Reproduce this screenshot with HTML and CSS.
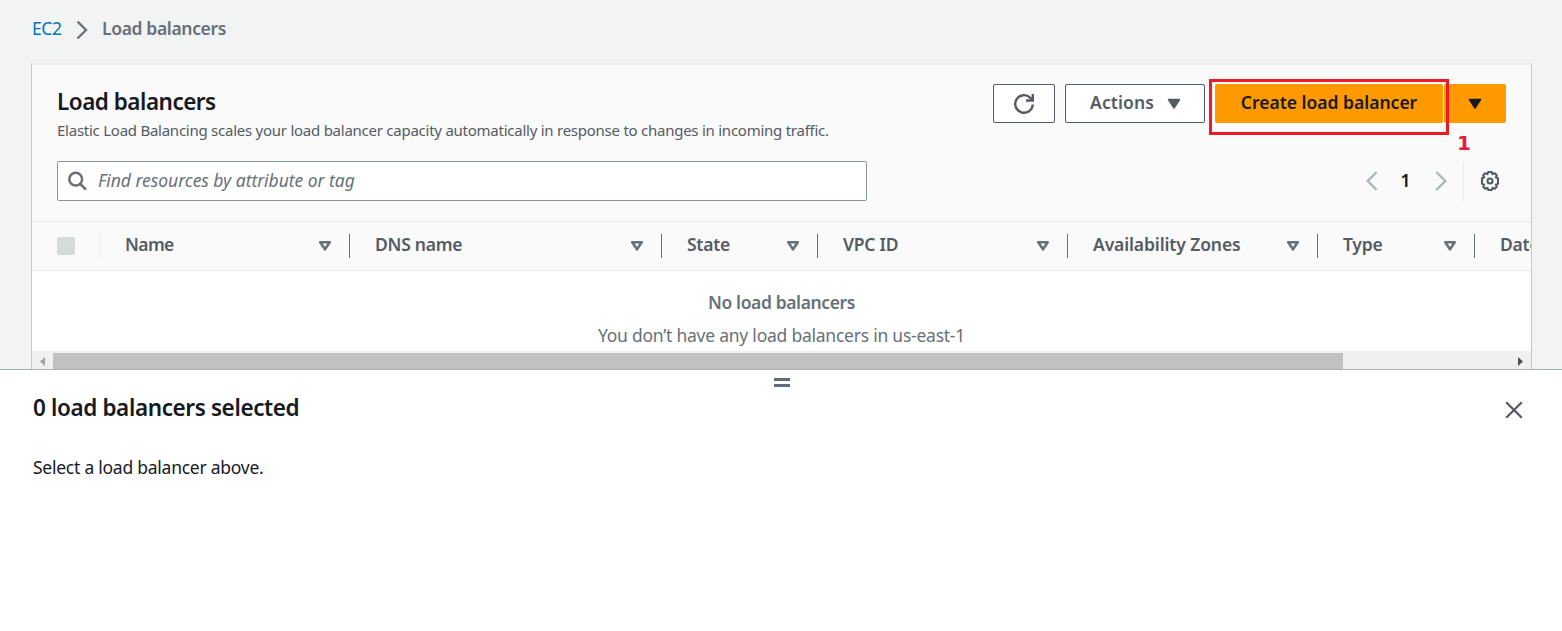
FILE: index.html
```html
<!DOCTYPE html>
<html lang="en">
<head>
<meta charset="utf-8">
<title>Load balancers</title>
<link rel="stylesheet" href="styles.css">
</head>
<body>
<main class="content">
  <nav class="breadcrumb">
    <a class="crumb-link">EC2</a>
    <svg class="crumb-sep" width="12" height="20" viewBox="0 0 12 20"><path d="M1.500 1.500 10 10 1.500 18.500"/></svg>
    <span class="crumb-current">Load balancers</span>
  </nav>
  <section class="panel">
    <header class="panel-head">
      <div class="title-row">
        <div class="titles">
          <h1 class="title">Load balancers</h1>
          <p class="description">Elastic Load Balancing scales your load balancer capacity automatically in response to changes in incoming traffic.</p>
        </div>
        <div class="actions">
          <button class="btn btn-refresh"><svg width="22" height="22" viewBox="0 0 22 22"><path class="stroke" d="M19.800 11.500a8.800 8.800 0 1 1-2.500-6.700l2.300 2.300"/><path class="stroke" d="M19.800 1v6.500h-6.800"/></svg></button>
          <button class="btn btn-actions"><span>Actions</span><svg width="14" height="12" viewBox="0 0 14 12"><path class="solid" d="M1.500 1.500h11L7 10z"/></svg></button>
          <div class="split">
            <button class="btn-primary btn-create"><span>Create load balancer</span></button>
            <button class="btn-primary btn-more"><svg width="14" height="12" viewBox="0 0 14 12"><path class="solid" d="M1.500 1.500h11L7 10z"/></svg></button>
            <div class="highlight"></div>
            <span class="step">1</span>
          </div>
        </div>
      </div>
      <div class="filter-row">
        <div class="search">
          <svg width="20" height="20" viewBox="0 0 20 20"><circle cx="7.700" cy="8.200" r="6.400"/><path d="m12.300 13 5.700 5.600"/></svg>
          <span class="placeholder">Find resources by attribute or tag</span>
        </div>
        <div class="pager">
          <svg class="page-arrow" width="12" height="20" viewBox="0 0 12 20"><path d="M10.700 1 1.700 10l9 9"/></svg>
          <span class="page">1</span>
          <svg class="page-arrow" width="12" height="20" viewBox="0 0 12 20"><path d="m1.300 1 9 9-9 9"/></svg>
          <span class="settings"><svg width="22" height="22" viewBox="0 0 22 22"><path d="M9.200 2h3.600l.7 2.100 2.200-.9 2.100 2.100-.9 2.200 2.100.7v5.600l-2.100.7.9 2.200-2.100 2.100-2.200-.9-.7 2.100H9.200l-.7-2.100-2.200.9-2.100-2.100.9-2.200-2.100-.7V8.200l2.100-.7-.9-2.200 2.100-2.100 2.200.9z"/><circle cx="11" cy="11" r="2.500"/></svg></span>
        </div>
      </div>
    </header>
    <div class="columns">
      <div class="col check"><span class="checkbox"></span></div>
      <div class="col name"><span>Name</span><svg class="sort" width="14" height="12" viewBox="0 0 14 12"><path d="M2.300 2.200h9.400L7 9.400z"/></svg></div>
      <div class="col dns"><span>DNS name</span><svg class="sort" width="14" height="12" viewBox="0 0 14 12"><path d="M2.300 2.200h9.400L7 9.400z"/></svg></div>
      <div class="col state"><span>State</span><svg class="sort" width="14" height="12" viewBox="0 0 14 12"><path d="M2.300 2.200h9.400L7 9.400z"/></svg></div>
      <div class="col vpc"><span>VPC ID</span><svg class="sort" width="14" height="12" viewBox="0 0 14 12"><path d="M2.300 2.200h9.400L7 9.400z"/></svg></div>
      <div class="col zones"><span>Availability Zones</span><svg class="sort" width="14" height="12" viewBox="0 0 14 12"><path d="M2.300 2.200h9.400L7 9.400z"/></svg></div>
      <div class="col type"><span>Type</span><svg class="sort" width="14" height="12" viewBox="0 0 14 12"><path d="M2.300 2.200h9.400L7 9.400z"/></svg></div>
      <div class="col date"><span>Date</span></div>
    </div>
    <div class="empty">
      <p class="empty-title">No load balancers</p>
      <p class="empty-text">You don’t have any load balancers in us-east-1</p>
    </div>
    <div class="scrollbar">
      <svg class="scroll-arrow left" width="21" height="19" viewBox="0 0 21 19"><path d="M13 6v9l-5-4.500z"/></svg>
      <div class="thumb"></div>
      <svg class="scroll-arrow right" width="21" height="19" viewBox="0 0 21 19"><path d="M8 6v9l5-4.500z"/></svg>
    </div>
  </section>
</main>
<section class="drawer">
  <div class="handle"></div>
  <div class="drawer-head">
    <h2 class="drawer-title">0 load balancers selected</h2>
    <svg class="close" width="18" height="18" viewBox="0 0 18 18"><path d="m1.200 1.200 15.600 15.600M16.800 1.200 1.200 16.800"/></svg>
  </div>
  <p class="drawer-text">Select a load balancer above.</p>
</section>
</body>
</html>
```
FILE: styles.css
```css
* { box-sizing: border-box; }
body {
  margin: 0;
  height: 631px;
  overflow: hidden;
  background: #fff;
  color: #16191f;
  font-family: "Noto Sans", "Open Sans", sans-serif;
  font-size: 17.5px;
  line-height: 24px;
}
h1, h2, p { margin: 0; }
svg { display: block; flex: none; fill: none; }
button { font: inherit; margin: 0; padding: 0; display: flex; align-items: center; justify-content: center; }
button span { margin-top: -4px; }
.content { height: 369px; overflow: hidden; background: #f2f3f3; padding: 0 30px 0 31px; }
.breadcrumb { height: 63px; padding: 16px 0 0 1px; display: flex; align-items: flex-start; white-space: nowrap; }
.crumb-link { width: 44px; color: #0073bb; letter-spacing: -.4px; }
.crumb-sep { margin-top: 4px; margin-right: 14px; stroke: #687078; stroke-width: 2.4; }
.crumb-current { color: #687078; font-weight: 600; letter-spacing: -.35px; }
.panel { height: 306px; border: 1px solid #c3c8c8; border-top: 2px solid #eaeded; border-bottom: 0; background: #fff; overflow: hidden; }
.panel-head { height: 157px; background: #fafafa; border-bottom: 1px solid #eaeded; padding: 19px 25px 0; }
.title-row { display: flex; justify-content: space-between; height: 77px; }
.titles { white-space: nowrap; width: 800px; }
.title { padding-top: 4px; font-size: 22.5px; line-height: 28px; font-weight: 600; letter-spacing: -.5px; }
.description { padding-top: 4px; font-size: 15px; line-height: 20px; color: #545b64; letter-spacing: -.25px; }
.actions { display: flex; gap: 10px; align-items: flex-start; white-space: nowrap; }
.btn { height: 39px; background: #fff; border: 1px solid #545b64; border-radius: 2px; color: #545b64; font-weight: 600; letter-spacing: .1px; }
.btn-refresh { width: 62px; }
.btn-actions { width: 140px; gap: 13px; padding-left: 1px; }
.stroke { stroke: #545b64; stroke-width: 2.4; }
.solid { fill: currentColor; stroke: currentColor; stroke-width: 1.5; stroke-linejoin: round; }
.split { position: relative; display: flex; gap: 1px; }
.btn-primary { height: 39px; border: 0; background: #ff9900; color: #16191f; border-radius: 2px; font-weight: 600; }
.btn-create { width: 228px; }
.btn-more { width: 62px; }
.highlight { position: absolute; left: -6px; top: -5px; width: 240px; height: 56px; border: 3px solid #ed1c24; }
.step { position: absolute; left: 242px; top: 46px; font: 700 20px/26px "DejaVu Sans", sans-serif; letter-spacing: 0; color: #f5123a; }
.filter-row { display: flex; justify-content: space-between; }
.search { width: 810px; height: 40px; border: 1px solid #879596; border-radius: 2px; background: #fff; display: flex; align-items: center; padding-left: 10px; gap: 10px; }
.search svg { stroke: #687078; stroke-width: 2.5; }
.placeholder { font-style: italic; color: #687078; white-space: nowrap; letter-spacing: -.04px; margin-top: -2px; }
.pager { display: flex; align-items: center; height: 40px; }
.page-arrow { stroke: #aab7b8; stroke-width: 2.4; }
.page { width: 57px; padding-right: 2px; text-align: center; font-weight: 600; margin-top: -3px; }
.settings { margin-left: 16px; border-left: 1px solid #eaeded; height: 40px; width: 43px; display: flex; align-items: center; padding-left: 15px; }
.settings svg { stroke: #545b64; stroke-width: 2.1; stroke-linejoin: round; }
.columns { display: flex; height: 49px; background: #fafafa; border-bottom: 1px solid #eaeded; align-items: center; overflow: hidden; }
.col { flex: none; height: 24px; border-right: 1px solid #687078; padding: 0 17px 0 25px; display: flex; align-items: center; justify-content: space-between; color: #545b64; font-weight: 600; letter-spacing: -.25px; white-space: nowrap; }
.col span { margin-top: -4px; }
.col .checkbox { margin-top: 0; width: 18px; height: 18px; background: #d5dbdb; border-radius: 2px; }
.check { width: 68px; border-color: #eaeded; }
.name { width: 250px; letter-spacing: -.6px; }
.dns { width: 312px; }
.state { width: 156px; }
.vpc { width: 250px; }
.zones { width: 250px; letter-spacing: -.12px; }
.type { width: 157px; }
.date { width: 240px; }
.sort { stroke: #687078; stroke-width: 2.6; stroke-linejoin: round; }
.empty { height: 80px; padding-top: 19px; text-align: center; color: #687078; }
.empty-title { font-weight: 600; letter-spacing: -.38px; }
.empty-text { padding-top: 9px; letter-spacing: -.24px; }
.scrollbar { height: 19px; background: #f0f0f0; display: flex; align-items: flex-start; }
.thumb { width: 1290px; height: 17px; margin-top: 2px; background: #c1c1c1; }
.scroll-arrow.left { fill: #a3a3a3; }
.scroll-arrow.right { fill: #505050; margin-left: 167px; }
.drawer { border-top: 1px solid #aab0b0; padding: 8px 39px 0 33px; height: 262px; }
.handle { width: 16px; height: 9px; margin-left: 741px; border-top: 3px solid #646b74; border-bottom: 3px solid #646b74; }
.drawer-head { display: flex; justify-content: space-between; height: 50px; padding-top: 7px; }
.drawer-title { font-size: 22.5px; line-height: 28px; font-weight: 600; white-space: nowrap; letter-spacing: -.38px; }
.close { margin-top: 7px; stroke: #545b64; stroke-width: 2.3; }
.drawer-text { padding-top: 18px; letter-spacing: -.25px; }
```
